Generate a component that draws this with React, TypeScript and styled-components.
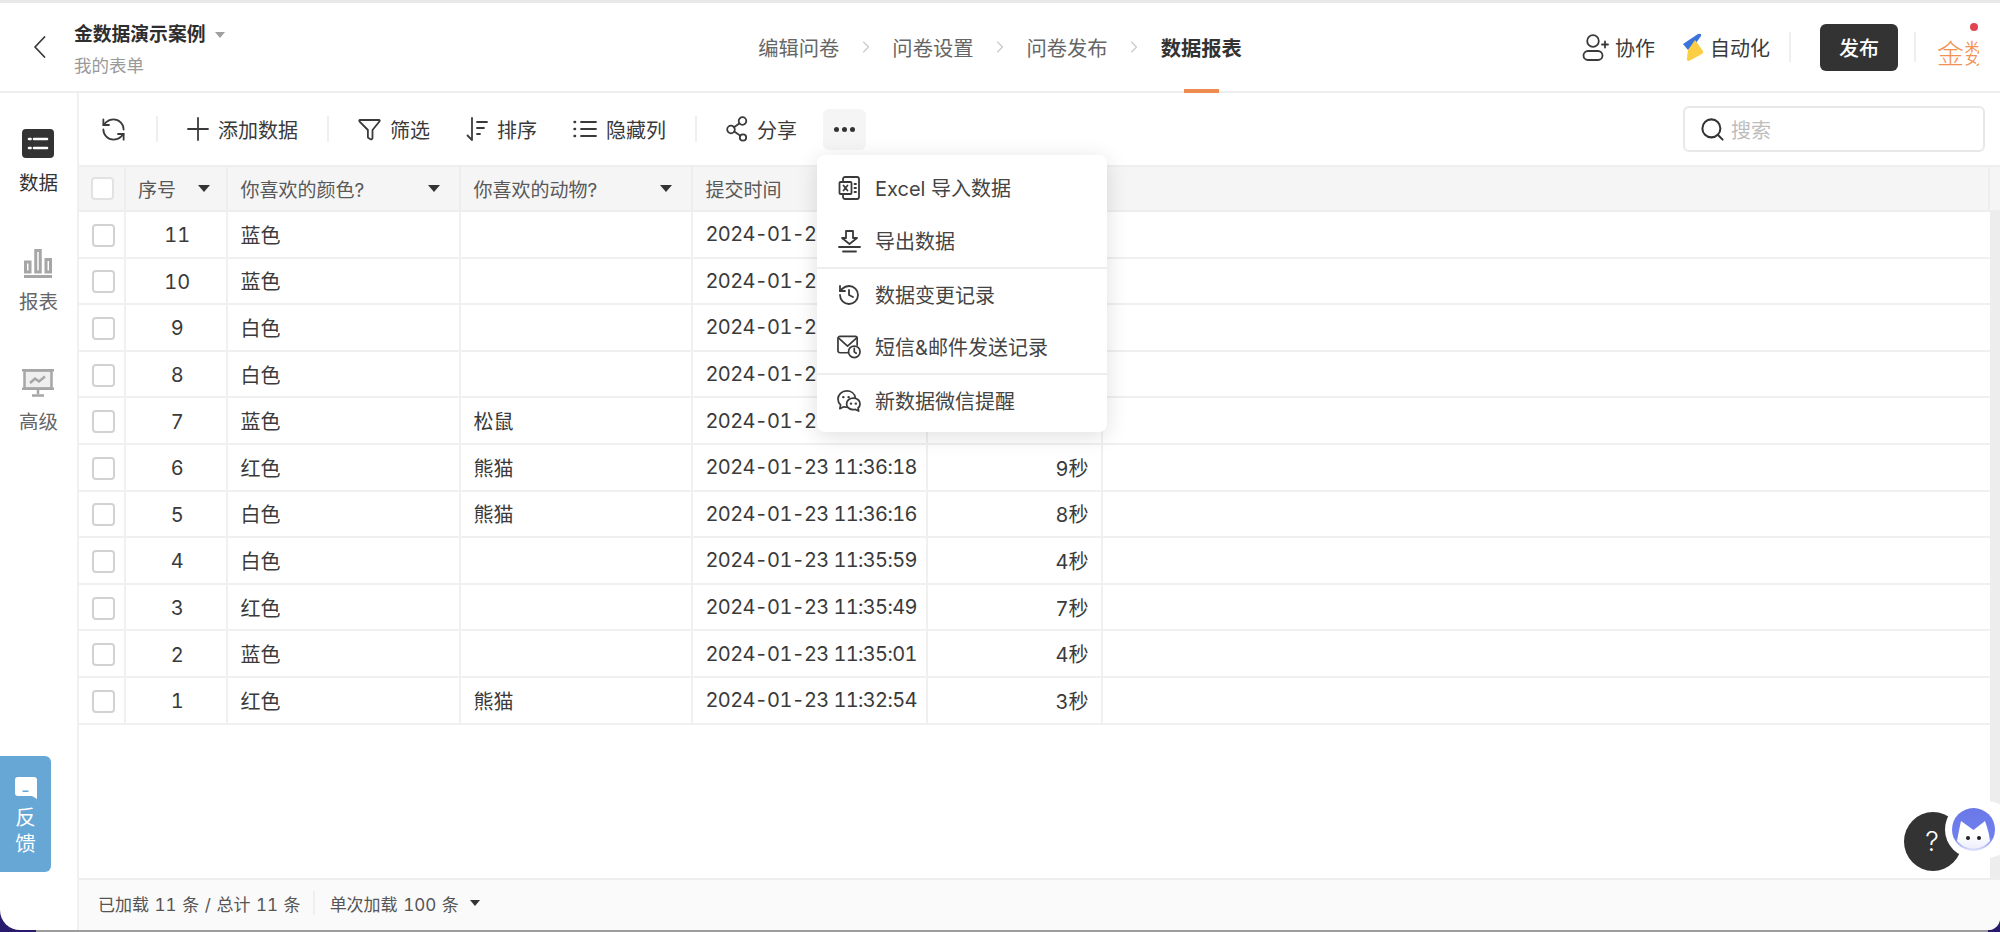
import { ReactNode } from "react";
import styled, { createGlobalStyle } from "styled-components";
import { ChevronRight, History, RefreshCcw, Search } from "lucide-react";

const GlobalStyle = createGlobalStyle`
  html, body {
    margin: 0;
    padding: 0;
    background: #fff;
  }
  body {
    font-family: Inter, "Noto Sans CJK SC", "Noto Sans", sans-serif;
    color: #3a3a3a;
  }
`;

const Page = styled.div`
  position: relative;
  width: 2000px;
  height: 932px;
  overflow: hidden;
  display: flex;
  flex-direction: column;
  background: #fff;
`;

const TopBar = styled.header`
  height: 93px;
  box-sizing: border-box;
  flex-shrink: 0;
  border-top: 3px solid #e9e9e9;
  border-bottom: 2px solid #eeeeee;
  display: grid;
  grid-template-columns: 1fr auto 1fr;
  align-items: stretch;
`;

const TitleArea = styled.div`
  display: flex;
  align-items: center;
  padding-left: 33px;
  gap: 28px;
`;

const TitleText = styled.div`
  display: flex;
  flex-direction: column;
  gap: 7px;
  padding-top: 6px;
`;

const FormName = styled.div`
  display: flex;
  align-items: center;
  gap: 10px;
  font-size: 18.8px;
  line-height: 24px;
  font-weight: 700;
  color: #2e2e2e;
`;

const FormPath = styled.div`
  font-size: 17.5px;
  line-height: 24px;
  color: #9a9a9a;
`;

const Caret = styled.span<{ $size?: number; $color?: string }>`
  display: inline-block;
  flex-shrink: 0;
  width: 0;
  height: 0;
  border-left: ${(p) => p.$size ?? 6}px solid transparent;
  border-right: ${(p) => p.$size ?? 6}px solid transparent;
  border-top: ${(p) => (p.$size ?? 6) + 1}px solid ${(p) => p.$color ?? "#333"};
`;

const StepNav = styled.nav`
  display: flex;
  align-items: stretch;
  gap: 16.5px;
  color: #c9c9c9;
`;

const Step = styled.div<{ $active?: boolean }>`
  position: relative;
  display: flex;
  align-items: center;
  font-size: 20.3px;
  font-weight: ${(p) => (p.$active ? 700 : 400)};
  color: ${(p) => (p.$active ? "#333" : "#666")};

  ${(p) =>
    p.$active &&
    `&::after {
      content: "";
      position: absolute;
      left: 23px;
      right: 23px;
      bottom: -2px;
      height: 4px;
      background: #ee8c50;
    }`}
`;

const StepArrow = styled.div`
  display: flex;
  align-items: center;
`;

const TopActions = styled.div`
  display: flex;
  align-items: center;
  justify-content: flex-end;
  padding-right: 21px;
`;

const TopAction = styled.div`
  display: flex;
  align-items: center;
  gap: 6px;
  font-size: 20px;
  color: #3a3a3a;
  margin-right: 19px;

  & + & {
    margin-left: 9px;
  }
`;

const VLine = styled.span<{ $h?: number }>`
  display: block;
  width: 2px;
  height: ${(p) => p.$h ?? 30}px;
  background: #efefef;
  flex-shrink: 0;
`;

const PublishButton = styled.button`
  width: 78px;
  height: 47px;
  margin: 0 16px 0 29px;
  border: none;
  border-radius: 6px;
  background: #333333;
  color: #fff;
  font: 500 20px Inter, "Noto Sans CJK SC", sans-serif;
`;

const Avatar = styled.div`
  position: relative;
  width: 42px;
  margin-left: 21px;
  margin-top: 16px;
  font-size: 27px;
  line-height: 34px;
  color: #f39152;
  white-space: nowrap;

  &::before {
    content: "";
    position: absolute;
    right: 1px;
    top: -15px;
    width: 8px;
    height: 8px;
    border-radius: 50%;
    background: #e0454f;
  }
`;

const AvatarText = styled.div`
  overflow: hidden;
  font-weight: 300;
`;

const Body = styled.div`
  flex: 1;
  min-height: 0;
  display: flex;
  background: linear-gradient(90deg, #2a1a6e 36px, #9c9c9c 36px, #9c9c9c 1988px, #2a1a6e 1988px);
`;

const Sidebar = styled.aside`
  width: 79px;
  box-sizing: border-box;
  flex-shrink: 0;
  margin-bottom: 2px;
  padding-top: 29.5px;
  background: #fff;
  border-right: 2px solid #f0f0f0;
  border-bottom-left-radius: 20px;
  display: flex;
  flex-direction: column;
  align-items: center;
`;

const SideItem = styled.div<{ $active?: boolean }>`
  height: 119.5px;
  display: flex;
  flex-direction: column;
  align-items: center;
  font-size: 19.5px;
  line-height: 26px;
  color: ${(p) => (p.$active ? "#333" : "#666")};
`;

const SideIcon = styled.div`
  height: 42px;
  margin-bottom: 5px;
  display: flex;
  align-items: center;
  justify-content: center;
`;

const Main = styled.main`
  flex: 1;
  min-width: 0;
  margin-bottom: 2px;
  background: #fff;
  border-bottom-right-radius: 12px;
  display: flex;
  flex-direction: column;
  overflow: hidden;
`;

const Toolbar = styled.div`
  height: 72px;
  flex-shrink: 0;
  display: flex;
  align-items: center;
  gap: 29px;
  padding: 0 15px 0 21px;
  font-size: 20px;
  color: #3a3a3a;
`;

const ToolGroup = styled.div`
  display: flex;
  align-items: center;
  gap: 36px;
`;

const ToolButton = styled.div`
  display: flex;
  align-items: center;
  gap: 9px;
  white-space: nowrap;
`;

const MoreButton = styled.div`
  width: 43px;
  height: 41px;
  margin-left: -3px;
  border-radius: 6px;
  background: #f5f5f5;
  display: flex;
  align-items: center;
  justify-content: center;
  gap: 3px;
`;

const Dot = styled.span`
  width: 5px;
  height: 5px;
  border-radius: 50%;
  background: #333;
`;

const SearchBox = styled.div`
  width: 302px;
  height: 46px;
  box-sizing: border-box;
  margin-left: auto;
  padding-left: 14px;
  border: 2px solid #e8e8e8;
  border-radius: 6px;
  display: flex;
  align-items: center;
  gap: 5px;
  color: #bdbdbd;
`;

const Columns = `47px 101.5px 233px 232px 235.5px 174.5px 1fr`;

const HeadRow = styled.div`
  height: 47px;
  flex-shrink: 0;
  box-sizing: border-box;
  display: grid;
  grid-template-columns: ${Columns} 10px;
  background: #f5f5f5;
  border-top: 2px solid #efefef;
  border-bottom: 2px solid #eeeeee;
  font-size: 19px;
  color: #595959;
`;

const HeadCell = styled.div<{ $center?: boolean; $tight?: boolean }>`
  display: flex;
  align-items: center;
  justify-content: ${(p) => (p.$center ? "center" : "space-between")};
  padding: ${(p) => (p.$center ? "0 0 0 2px" : p.$tight ? "0 16px 0 12px" : "0 19px 0 13px")};
  border-right: 2px solid #eeeeee;
  min-width: 0;
  white-space: nowrap;
`;

const TableBody = styled.div`
  flex: 1;
  min-height: 0;
  display: flex;
`;

const RowList = styled.div`
  flex: 1;
  min-width: 0;
`;

const ScrollTrack = styled.div`
  width: 10px;
  flex-shrink: 0;
  background: #ededed;
`;

const Row = styled.div`
  height: 46.6px;
  box-sizing: border-box;
  display: grid;
  grid-template-columns: ${Columns};
  border-bottom: 2px solid #f0f0f0;
  font-size: 20px;
  font-variant-numeric: tabular-nums;
  color: #3a3a3a;
`;

const Cell = styled.div<{ $align?: "center" | "right"; $plain?: boolean }>`
  display: flex;
  align-items: center;
  justify-content: ${(p) =>
    p.$align === "center" ? "center" : p.$align === "right" ? "flex-end" : "flex-start"};
  padding: ${(p) => (p.$align === "center" ? "2px 0 0 3px" : "0 12px 0 13px")};
  border-right: ${(p) => (p.$plain ? "none" : "2px solid #f0f0f0")};
  white-space: nowrap;
  overflow: hidden;
`;

const TimeCell = styled(Cell)`
  letter-spacing: -0.65px;
`;

const Checkbox = styled.span<{ $head?: boolean }>`
  width: 23px;
  height: 23px;
  box-sizing: border-box;
  background: #fff;
  border: 2px solid ${(p) => (p.$head ? "#e2e2e2" : "#d2d2d2")};
  border-radius: 4px;
`;

const Footer = styled.footer`
  height: 52px;
  flex-shrink: 0;
  box-sizing: border-box;
  background: #fafafa;
  border-top: 2px solid #eeeeee;
  padding: 0 0 4px 19px;
  display: flex;
  align-items: center;
  font-size: 17px;
  font-variant-numeric: tabular-nums;
  word-spacing: 1px;
  color: #555;
`;

const FooterDivider = styled(VLine)`
  margin: 0 15px 0 12px;
`;

const PageSize = styled.div`
  display: flex;
  align-items: center;
  gap: 11px;
`;

const Menu = styled.div`
  position: absolute;
  left: 817px;
  top: 155px;
  width: 290px;
  box-sizing: border-box;
  padding: 6px 0;
  background: #fff;
  border-radius: 8px;
  box-shadow: 0 4px 22px rgba(0, 0, 0, 0.13);
`;

const MenuItem = styled.div<{ $divided?: boolean }>`
  height: 53px;
  box-sizing: border-box;
  display: flex;
  align-items: center;
  gap: 14px;
  padding-left: 20px;
  font-size: 20px;
  color: #444;
  border-top: ${(p) => (p.$divided ? "2px solid #eeeeee" : "none")};
`;

const MenuIcon = styled.div`
  width: 24px;
  display: flex;
  justify-content: center;
`;

const Feedback = styled.div`
  position: absolute;
  left: 0;
  top: 756px;
  width: 51px;
  height: 116px;
  box-sizing: border-box;
  padding-top: 21px;
  background: #66a7d6;
  border-radius: 0 6px 6px 0;
  color: #fff;
  font-size: 20.5px;
  line-height: 26px;
  display: flex;
  flex-direction: column;
  align-items: center;
`;

const FeedbackIcon = styled.div`
  margin-bottom: 6px;
  height: 22px;
`;

const HelpButton = styled.div`
  position: absolute;
  left: 1904px;
  top: 812px;
  width: 58px;
  height: 59px;
  padding-right: 2px;
  box-sizing: border-box;
  border-radius: 50%;
  background: #333;
  color: #fff;
  font-size: 27px;
  font-weight: 300;
  display: flex;
  align-items: center;
  justify-content: center;
`;

const BotDock = styled.div`
  position: absolute;
  left: 1945px;
  top: 801px;
  width: 70px;
  height: 57px;
  box-sizing: border-box;
  padding: 7px;
  background: #fff;
  border-radius: 29px;
`;

type RowData = [number, string, string, string, string];

const rows: RowData[] = [
  [11, "蓝色", "", "2024-01-23 11:43:02", "6秒"],
  [10, "蓝色", "", "2024-01-23 11:42:31", "5秒"],
  [9, "白色", "", "2024-01-23 11:41:17", "4秒"],
  [8, "白色", "", "2024-01-23 11:40:52", "5秒"],
  [7, "蓝色", "松鼠", "2024-01-23 11:36:24", "6秒"],
  [6, "红色", "熊猫", "2024-01-23 11:36:18", "9秒"],
  [5, "白色", "熊猫", "2024-01-23 11:36:16", "8秒"],
  [4, "白色", "", "2024-01-23 11:35:59", "4秒"],
  [3, "红色", "", "2024-01-23 11:35:49", "7秒"],
  [2, "蓝色", "", "2024-01-23 11:35:01", "4秒"],
  [1, "红色", "熊猫", "2024-01-23 11:32:54", "3秒"],
];

function Svg({ w, h, children }: { w: number; h: number; children: ReactNode }) {
  return (
    <svg
      width={w}
      height={h}
      viewBox={`0 0 ${w} ${h}`}
      fill="none"
      stroke="#3a3a3a"
      strokeWidth="1.8"
      strokeLinecap="round"
      strokeLinejoin="round"
    >
      {children}
    </svg>
  );
}

const BackIcon = () => (
  <Svg w={13} h={24}>
    <path d="M11.5 2 2 12l9.5 10" />
  </Svg>
);

const PlusIcon = () => (
  <Svg w={22} h={24}>
    <path d="M11 1v22M1 12h20" />
  </Svg>
);

const UserPlusIcon = () => (
  <Svg w={27} h={28}>
    <circle cx="11" cy="8" r="5.8" />
    <rect x="1.5" y="18" width="19" height="9" rx="4.5" />
    <path d="M20 11.5h6M23 8.5v6" />
  </Svg>
);

const AutoIcon = () => (
  <svg width="21" height="28" viewBox="0 0 21 28">
    <path d="M0 11 L15 1 Q19 0 18 3 L13 10 L5 17 Z" fill="#3b73dc" />
    <path d="M5 17 L12 7 L20 18 Q21 20 19 21 L6 28 Q3 28 4 25 Z" fill="#fbce45" />
  </svg>
);

const FilterIcon = () => (
  <Svg w={23} h={24}>
    <path d="M2 3h19a.8.8 0 0 1 .6 1.3L14.5 13v8a1.4 1.4 0 0 1-2 1.2l-2-1.2a1 1 0 0 1-.6-1v-7L1.4 4.3A.8.8 0 0 1 2 3z" />
  </Svg>
);

const SortIcon = () => (
  <Svg w={22} h={26}>
    <path d="M6 2v22M1.5 19.5 6 24" />
    <path d="M11 6h10M11 12h7M11 18h3" />
  </Svg>
);

const ListIcon = () => (
  <Svg w={24} h={20}>
    <path d="M8 3h15M8 10h15M8 17h15" />
    <path d="M1.5 3h.6M1.5 10h.6M1.5 17h.6" strokeWidth="2.4" />
  </Svg>
);

const ShareIcon = () => (
  <Svg w={22} h={26}>
    <circle cx="16.5" cy="5" r="3.8" />
    <circle cx="5" cy="13.5" r="3.8" />
    <circle cx="17" cy="21.5" r="3.2" />
    <path d="M8 11.3l5.6-4M8.2 15.6l6.2 4.2" />
  </Svg>
);

const ExcelIcon = () => (
  <Svg w={22} h={24}>
    <path d="M5 6V3a2 2 0 0 1 2-2h12a2 2 0 0 1 2 2v18a2 2 0 0 1-2 2H7a2 2 0 0 1-2-2v-3" />
    <rect x="1.5" y="6" width="12" height="12" rx="1" />
    <path d="M5.5 9.5l4 5M9.5 9.5l-4 5M16.5 8h1.5M16.5 12h1.5M16.5 16h1.5" />
  </Svg>
);

const ExportIcon = () => (
  <Svg w={23} h={24}>
    <path d="M8 2h7v7h4l-7.5 6L4 9h4z" />
    <path d="M1 18h21M5 22.5h13" />
  </Svg>
);

const MailClockIcon = () => (
  <Svg w={25} h={24}>
    <path d="M11 18H3a2 2 0 0 1-2-2V3a2 2 0 0 1 2-2h16a2 2 0 0 1 2 2v7" />
    <path d="M1.5 2.5 11 11l9.5-8.5" />
    <circle cx="18" cy="17" r="6" />
    <path d="M18 13.5V17l2 1.5" />
  </Svg>
);

const WechatIcon = () => (
  <Svg w={25} h={24}>
    <path d="M10 18.5a10 10 0 0 1-3-.5L3 20l.7-4A8 8 0 0 1 1 10C1 5.2 5 1.5 10 1.5s8.5 3 9 7" />
    <path d="M17 9c4 0 7 2.6 7 6 0 1.7-.8 3.2-2 4.3l.5 3.2-3.2-1.7A8.5 8.5 0 0 1 17 21c-4 0-7-2.6-7-6s3-6 7-6z" />
    <path d="M14.5 14.8h.2M19.5 14.8h.2M6.5 8h.2M12 8h.2" strokeWidth="2.4" />
  </Svg>
);

const DataIcon = () => (
  <svg width="32" height="29" viewBox="0 0 32 29">
    <rect width="32" height="29" rx="4" fill="#333" />
    <path d="M7 10h1.6M7 19h1.6M12 10h13M12 19h13" stroke="#fff" strokeWidth="2.6" strokeLinecap="round" />
  </svg>
);

const ReportIcon = () => (
  <svg width="28" height="29" viewBox="0 0 28 29">
    <rect y="26" width="28" height="3" fill="#a6a6a6" />
    <g fill="none" stroke="#a6a6a6" strokeWidth="3">
      <rect x="1.5" y="13" width="4.5" height="10" />
      <rect x="11.75" y="1.5" width="4.5" height="21.5" />
      <rect x="22" y="10.5" width="4.5" height="12.5" />
    </g>
  </svg>
);

const AdvancedIcon = () => (
  <svg width="32" height="28" viewBox="0 0 32 28">
    <rect x="2.5" y="1.5" width="27" height="18" fill="#efefef" stroke="#a6a6a6" strokeWidth="2.5" />
    <path d="M0 1.2h32M0 19.8h32" stroke="#a6a6a6" strokeWidth="2.5" />
    <path d="M8 14l5-4.5 4 3 6-5" stroke="#a6a6a6" strokeWidth="2.5" fill="none" />
    <path d="M16 20v5M10 26.5h12" stroke="#a6a6a6" strokeWidth="2.5" />
  </svg>
);

const BubbleIcon = () => (
  <svg width="22" height="22" viewBox="0 0 22 22">
    <path d="M3 0h16a3 3 0 0 1 3 3v19l-5-3H3a3 3 0 0 1-3-3V3a3 3 0 0 1 3-3z" fill="#fff" />
    <path d="M7 13.5h7l-1 1.5H8z" fill="#66a7d6" />
  </svg>
);

const CatIcon = () => (
  <svg width="43" height="43" viewBox="0 0 43 43">
    <defs>
      <linearGradient id="catBg" x1="0" y1="0" x2="0" y2="1">
        <stop offset="0" stopColor="#6b78e8" />
        <stop offset="0.7" stopColor="#6f80ee" />
        <stop offset="1" stopColor="#e4e6fb" />
      </linearGradient>
      <linearGradient id="catFace" x1="0" y1="0" x2="0" y2="1">
        <stop offset="0.5" stopColor="#ffffff" />
        <stop offset="1" stopColor="#eceefc" />
      </linearGradient>
    </defs>
    <circle cx="21.5" cy="21.5" r="21.5" fill="url(#catBg)" />
    <path d="M9 13 L21.5 22 L33 13 Q37 24 38 33 A21.5 21.5 0 0 1 5 33 Q7 22 9 13z" fill="url(#catFace)" />
    <circle cx="16" cy="30" r="2" fill="#222" />
    <circle cx="27" cy="30" r="2" fill="#222" />
  </svg>
);

const StepChevron = () => (
  <StepArrow>
    <ChevronRight size={20} strokeWidth={1.4} />
  </StepArrow>
);

export default function App() {
  return (
    <Page>
      <GlobalStyle />
      <TopBar>
        <TitleArea>
          <BackIcon />
          <TitleText>
            <FormName>
              金数据演示案例
              <Caret $size={5} $color="#a0a0a0" />
            </FormName>
            <FormPath>我的表单</FormPath>
          </TitleText>
        </TitleArea>
        <StepNav>
          <Step>编辑问卷</Step>
          <StepChevron />
          <Step>问卷设置</Step>
          <StepChevron />
          <Step>问卷发布</Step>
          <StepChevron />
          <Step $active>数据报表</Step>
        </StepNav>
        <TopActions>
          <TopAction>
            <UserPlusIcon />
            协作
          </TopAction>
          <TopAction>
            <AutoIcon />
            自动化
          </TopAction>
          <VLine />
          <PublishButton>发布</PublishButton>
          <VLine />
          <Avatar>
            <AvatarText>金数据</AvatarText>
          </Avatar>
        </TopActions>
      </TopBar>
      <Body>
        <Sidebar>
          <SideItem $active>
            <SideIcon>
              <DataIcon />
            </SideIcon>
            数据
          </SideItem>
          <SideItem>
            <SideIcon>
              <ReportIcon />
            </SideIcon>
            报表
          </SideItem>
          <SideItem>
            <SideIcon>
              <AdvancedIcon />
            </SideIcon>
            高级
          </SideItem>
        </Sidebar>
        <Main>
          <Toolbar>
            <RefreshCcw size={27} strokeWidth={1.6} color="#3a3a3a" />
            <VLine $h={26} />
            <ToolButton>
              <PlusIcon />
              添加数据
            </ToolButton>
            <VLine $h={26} />
            <ToolGroup>
              <ToolButton>
                <FilterIcon />
                筛选
              </ToolButton>
              <ToolButton>
                <SortIcon />
                排序
              </ToolButton>
              <ToolButton>
                <ListIcon />
                隐藏列
              </ToolButton>
            </ToolGroup>
            <VLine $h={26} />
            <ToolButton>
              <ShareIcon />
              分享
            </ToolButton>
            <MoreButton>
              <Dot />
              <Dot />
              <Dot />
            </MoreButton>
            <SearchBox>
              <Search size={27} strokeWidth={1.8} color="#333" />
              搜索
            </SearchBox>
          </Toolbar>
          <HeadRow>
            <HeadCell $center>
              <Checkbox $head />
            </HeadCell>
            <HeadCell $tight>
              序号
              <Caret />
            </HeadCell>
            <HeadCell>
              你喜欢的颜色?
              <Caret />
            </HeadCell>
            <HeadCell>
              你喜欢的动物?
              <Caret />
            </HeadCell>
            <HeadCell>提交时间</HeadCell>
            <HeadCell />
            <HeadCell />
            <div />
          </HeadRow>
          <TableBody>
            <RowList>
              {rows.map(([id, color, animal, time, spent]) => (
                <Row key={id}>
                  <Cell $align="center">
                    <Checkbox />
                  </Cell>
                  <Cell $align="center">{id}</Cell>
                  <Cell>{color}</Cell>
                  <Cell>{animal}</Cell>
                  <TimeCell>{time}</TimeCell>
                  <Cell $align="right">{spent}</Cell>
                  <Cell $plain />
                </Row>
              ))}
            </RowList>
            <ScrollTrack />
          </TableBody>
          <Footer>
            已加载 11 条 / 总计 11 条
            <FooterDivider $h={24} />
            <PageSize>
              单次加载 100 条
              <Caret $size={5} />
            </PageSize>
          </Footer>
        </Main>
      </Body>
      <Menu>
        <MenuItem>
          <MenuIcon>
            <ExcelIcon />
          </MenuIcon>
          Excel 导入数据
        </MenuItem>
        <MenuItem>
          <MenuIcon>
            <ExportIcon />
          </MenuIcon>
          导出数据
        </MenuItem>
        <MenuItem $divided>
          <MenuIcon>
            <History size={24} strokeWidth={1.8} color="#3a3a3a" />
          </MenuIcon>
          数据变更记录
        </MenuItem>
        <MenuItem>
          <MenuIcon>
            <MailClockIcon />
          </MenuIcon>
          短信&邮件发送记录
        </MenuItem>
        <MenuItem $divided>
          <MenuIcon>
            <WechatIcon />
          </MenuIcon>
          新数据微信提醒
        </MenuItem>
      </Menu>
      <Feedback>
        <FeedbackIcon>
          <BubbleIcon />
        </FeedbackIcon>
        <span>反</span>
        <span>馈</span>
      </Feedback>
      <HelpButton>?</HelpButton>
      <BotDock>
        <CatIcon />
      </BotDock>
    </Page>
  );
}
